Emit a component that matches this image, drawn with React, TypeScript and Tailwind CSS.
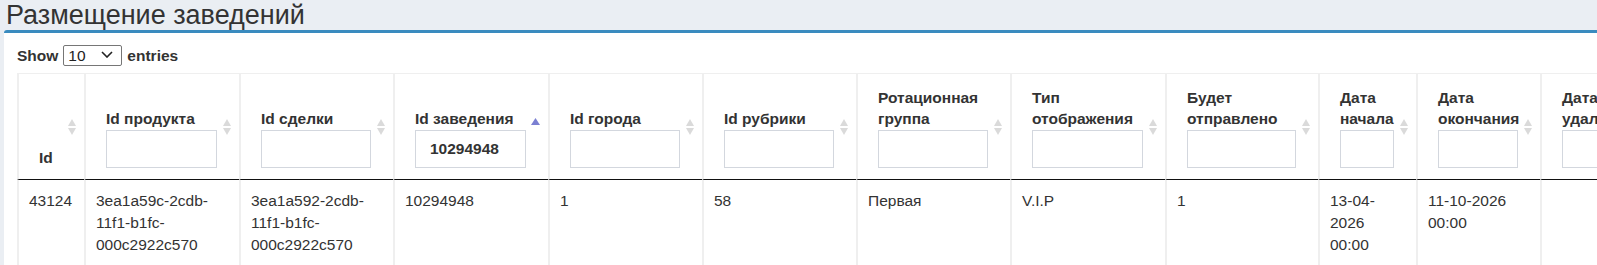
import { useState } from "react";

type Column = {
  title: string;
  width: string;
  filter?: boolean;
  sorted?: boolean;
};

const columns: Column[] = [
  { title: "Id", width: "w-[67px]" },
  { title: "Id продукта", width: "w-[155px]", filter: true },
  { title: "Id сделки", width: "w-[154px]", filter: true },
  { title: "Id заведения", width: "w-[155px]", filter: true, sorted: true },
  { title: "Id города", width: "w-[154px]", filter: true },
  { title: "Id рубрики", width: "w-[154px]", filter: true },
  { title: "Ротационная группа", width: "w-[154px]", filter: true },
  { title: "Тип отображения", width: "w-[155px]", filter: true },
  { title: "Будет отправлено", width: "w-[153px]", filter: true },
  { title: "Дата начала", width: "w-[98px]", filter: true },
  { title: "Дата окончания", width: "w-[124px]", filter: true },
  { title: "Дата удаления", width: "w-[130px]", filter: true },
];

const row: React.ReactNode[] = [
  "43124",
  <>3ea1a59c-2cdb-<br />11f1-b1fc-<br />000c2922c570</>,
  <>3ea1a592-2cdb-<br />11f1-b1fc-<br />000c2922c570</>,
  "10294948",
  "1",
  "58",
  "Первая",
  "V.I.P",
  "1",
  <>13-04-<br />2026<br />00:00</>,
  <>11-10-2026<br />00:00</>,
  "",
];

function SortIcon({ active }: { active?: boolean }) {
  if (active) {
    return (
      <svg width="9" height="7" viewBox="0 0 9 7" className="absolute right-[8px] top-[44px]">
        <polygon points="4.5,0 9,7 0,7" fill="#7b80d2" />
      </svg>
    );
  }
  return (
    <svg
      width="8"
      height="16"
      viewBox="0 0 8 16"
      className="absolute right-[8px] top-1/2 -translate-y-1/2"
    >
      <polygon points="4,0 8,7 0,7" fill="#dadada" />
      <polygon points="0,9 8,9 4,16" fill="#dadada" />
    </svg>
  );
}

export default function App() {
  const [pageSize, setPageSize] = useState("10");
  const [filters, setFilters] = useState<Record<string, string>>({
    "Id заведения": "10294948",
  });

  return (
    <div className="flex h-[265px] w-[1597px] flex-col overflow-hidden bg-[#eaeef3] text-[#333] font-['Liberation_Sans',Arial,sans-serif]">
      <h1 className="h-[30px] shrink-0 pl-[6px] text-[27px] leading-[30px] font-normal text-[#333]">
        Размещение заведений
      </h1>

      <div className="ml-[4px] flex-1 overflow-hidden rounded-tl-[3px] border-t-[3px] border-[#3a8bbf] bg-white pl-[13px] pt-[12px]">
        <div className="flex h-[21px] items-center gap-[5px] text-[15.5px] font-bold">
          <span>Show</span>
          <div className="relative">
            <select
              value={pageSize}
              onChange={(e) => setPageSize(e.target.value)}
              className="h-[21px] w-[59px] appearance-none rounded-[2px] border border-[#767676] bg-white pl-[4px] text-[15.5px] font-normal leading-[19px] text-[#222]"
            >
              <option>10</option>
              <option>25</option>
              <option>50</option>
              <option>100</option>
            </select>
            <svg
              width="12"
              height="7"
              viewBox="0 0 12 7"
              className="pointer-events-none absolute left-[38px] top-[7px]"
            >
              <polyline points="1,1 6,6 11,1" fill="none" stroke="#222" strokeWidth="1.6" />
            </svg>
          </div>
          <span>entries</span>
        </div>

        <table className="mt-[7px] w-[1653px] min-w-[1653px] table-fixed border-separate border-spacing-0 border-t border-[#efefef] text-[15.5px]">
          <colgroup>
            {columns.map((col) => (
              <col key={col.title} className={col.width} />
            ))}
          </colgroup>
          <thead>
            <tr>
              {columns.map((col) => (
                <th
                  key={col.title}
                  className="border-b border-l-2 border-b-[#111] border-l-[#efefef] p-0 text-left align-bottom font-bold"
                >
                  <div className="relative flex h-[105px] flex-col justify-end pb-[11px] pl-[20px] pr-[22px] leading-[21px]">
                    <span>{col.title}</span>
                    {col.filter && (
                      <input
                        value={filters[col.title] ?? ""}
                        onChange={(e) =>
                          setFilters({ ...filters, [col.title]: e.target.value })
                        }
                        className="mt-[1px] h-[38px] w-full border border-[#d3d7de] pl-[14px] text-[15.5px] font-bold text-[#333] outline-none"
                      />
                    )}
                    <SortIcon active={col.sorted} />
                  </div>
                </th>
              ))}
            </tr>
          </thead>
          <tbody>
            <tr>
              {row.map((cell, i) => (
                <td
                  key={i}
                  className="h-[90px] border-l-2 border-[#efefef] pl-[10px] pt-[10px] align-top leading-[22px]"
                >
                  {cell}
                </td>
              ))}
            </tr>
          </tbody>
        </table>
      </div>
    </div>
  );
}
